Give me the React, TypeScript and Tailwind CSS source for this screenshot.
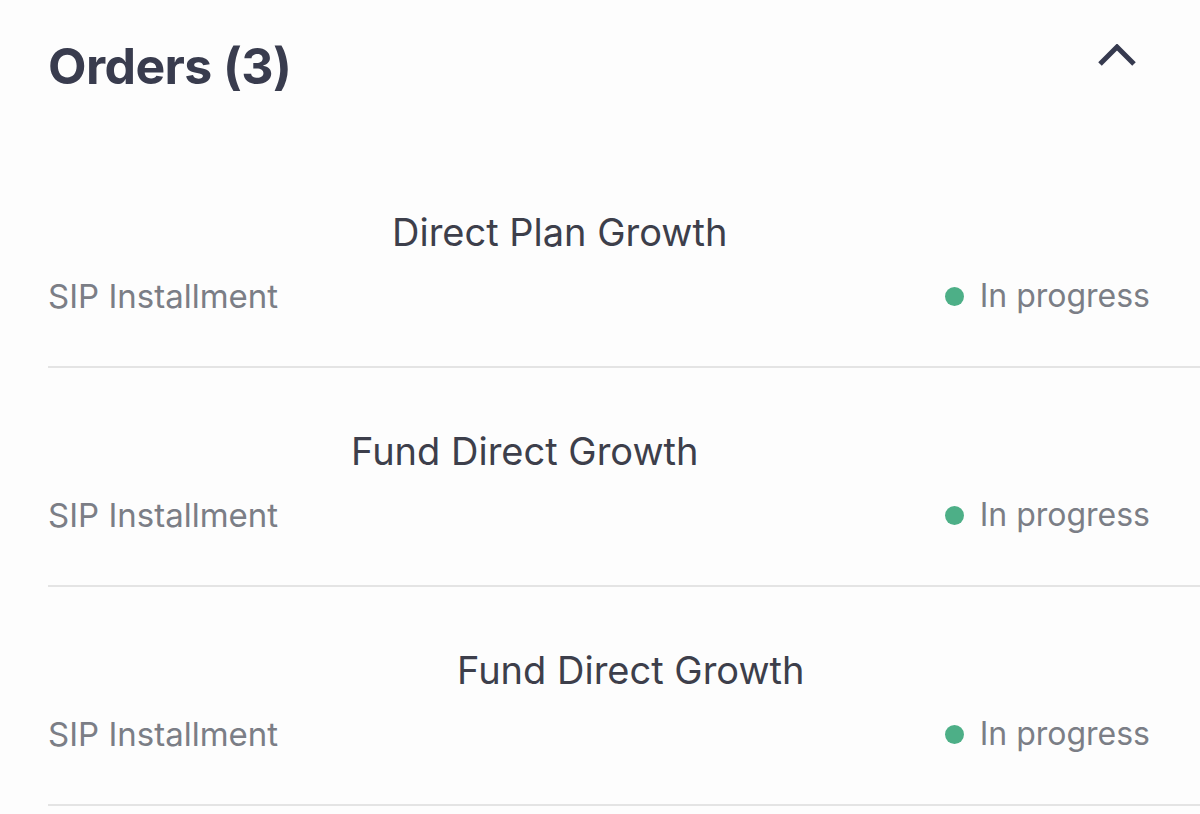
import React from "react";

const rows = [
  { name: "Direct Plan Growth", offset: "ml-[344px]" },
  { name: "Fund Direct Growth", offset: "ml-[303px]" },
  { name: "Fund Direct Growth", offset: "ml-[409px]" },
];

export default function App() {
  return (
    <div
      className="w-[1200px] h-[814px] overflow-hidden bg-[#fdfdfd]"
      style={{ fontFamily: "Inter, 'Noto Sans', sans-serif" }}
    >
      <div className="h-[149px] flex items-start justify-between pl-12 pr-[64px] pt-[36px]">
        <h1 className="text-[50px] leading-[60px] font-bold text-[#393c4e] tracking-[-0.6px]">
          Orders (3)
        </h1>
        <svg width="38" height="24" viewBox="0 0 38 24" className="mt-[8px]">
          <polyline
            points="2,20 19,3 36,20"
            fill="none"
            stroke="#363a4f"
            strokeWidth="5"
          />
        </svg>
      </div>
      <div className="ml-12">
        {rows.map((r, i) => (
          <div
            key={i}
            className="h-[219px] border-b-2 border-[#e4e4e4] pt-[61px] pr-[50px] flex flex-col"
          >
            <div
              className={`${r.offset} text-[38px] leading-[44px] text-[#3d3f4b]`}
            >
              {r.name}
            </div>
            <div className="mt-[22px] flex items-center justify-between text-[33px] leading-[40px] text-[#7b7e86]">
              <span>SIP Installment</span>
              <span className="flex items-center gap-[16px] text-[32px]">
                <span className="w-[19px] h-[19px] rounded-full bg-[#4daf87]" />
                <span>In progress</span>
              </span>
            </div>
          </div>
        ))}
      </div>
    </div>
  );
}
